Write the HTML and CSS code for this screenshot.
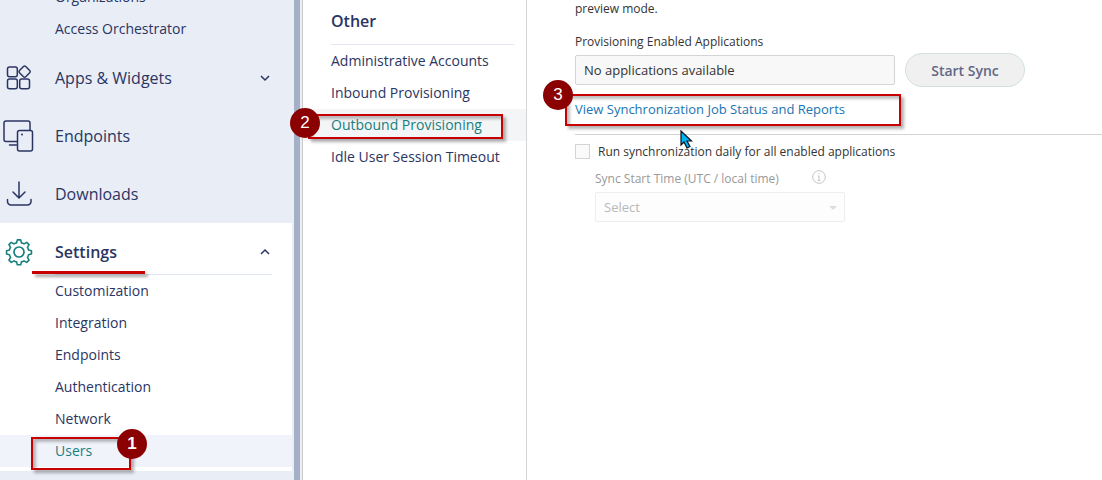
FILE: index.html
```html
<!DOCTYPE html>
<html lang="en">
<head>
<meta charset="UTF-8">
<meta name="viewport" content="width=device-width, initial-scale=1.0">
<title>Outbound Provisioning</title>
<link rel="stylesheet" href="styles.css">
</head>
<body>
<div class="layout">

<nav class="sidebar">
  <ul class="sub-list scrolled">
    <li><a href="#">Organizations</a></li>
    <li><a href="#">Access Orchestrator</a></li>
  </ul>
  <a class="nav-item" href="#">
    <svg class="icon" viewBox="0 0 38 38">
      <rect x="7.500" y="8" width="9.800" height="9.800" rx="2"/>
      <rect x="7.500" y="20" width="9.800" height="9.800" rx="2"/>
      <rect x="19.700" y="20" width="9.800" height="9.800" rx="2"/>
      <rect x="20.200" y="8.200" width="8.800" height="8.800" rx="1.600" transform="rotate(45 24.600 12.600)"/>
    </svg>
    <span>Apps &amp; Widgets</span>
    <svg class="chevron" viewBox="0 0 12 12"><path d="M2 4l4 4 4-4"/></svg>
  </a>
  <a class="nav-item" href="#">
    <svg class="icon" viewBox="0 0 38 38">
      <path d="M17 24.500H6a2 2 0 0 1-2-2V6a2 2 0 0 1 2-2h22a2 2 0 0 1 2 2v7M9.500 28h7"/>
      <rect x="17.500" y="13.500" width="15" height="20.500" rx="2"/>
      <circle class="dot" cx="22" cy="17.500" r="1"/>
    </svg>
    <span>Endpoints</span>
  </a>
  <a class="nav-item" href="#">
    <svg class="icon" viewBox="0 0 38 38">
      <path d="M19 7v16M13 17l6 6 6-6M7.500 24.500v2a3.500 3.500 0 0 0 3.500 3.500h16.500a3.500 3.500 0 0 0 3.500-3.500v-2"/>
    </svg>
    <span>Downloads</span>
  </a>
  <div class="nav-group">
    <a class="nav-item open" href="#">
      <svg class="icon teal" viewBox="0 0 38 38">
        <path transform="translate(19 19) scale(.93)" d="M-1.800-13h3.600l.8 3.200q1.600.3 2.800 1.100l2.900-1.700 2.500 2.500-1.700 2.900q.8 1.200 1.100 2.800l3.200.8v3.600l-3.200.8q-.3 1.600-1.100 2.800l1.700 2.900-2.500 2.500-2.900-1.700q-1.200.8-2.800 1.100l-.8 3.200h-3.600l-.8-3.200q-1.600-.3-2.800-1.100l-2.900 1.700-2.500-2.500 1.700-2.900q-.8-1.200-1.100-2.800l-3.200-.8v-3.600l3.200-.8q.3-1.600 1.100-2.800l-1.700-2.900 2.500-2.500 2.900 1.700q1.200-.8 2.800-1.100z"/>
        <circle cx="19" cy="19" r="5"/>
      </svg>
      <span>Settings</span>
      <svg class="chevron" viewBox="0 0 12 12"><path d="M2 8l4-4 4 4"/></svg>
      <i class="underline"></i>
    </a>
    <ul class="sub-list">
      <li><a href="#">Customization</a></li>
      <li><a href="#">Integration</a></li>
      <li><a href="#">Endpoints</a></li>
      <li><a href="#">Authentication</a></li>
      <li><a href="#">Network</a></li>
      <li class="current"><a href="#">Users</a>
        <div class="mark mark-users"><b class="badge">1</b></div>
      </li>
    </ul>
  </div>
</nav>
<div class="scrollbar"></div>

<section class="menu">
  <h2>Other</h2>
  <ul>
    <li><a href="#">Administrative Accounts</a></li>
    <li><a href="#">Inbound Provisioning</a></li>
    <li class="current"><a href="#">Outbound Provisioning</a>
      <div class="mark mark-outbound"><b class="badge">2</b></div>
    </li>
    <li><a href="#">Idle User Session Timeout</a></li>
  </ul>
</section>

<main class="content">
  <p>preview mode.</p>
  <label class="field-label" for="apps">Provisioning Enabled Applications</label>
  <div class="apps-row">
    <input type="text" id="apps" value="No applications available" readonly>
    <button type="button">Start Sync</button>
  </div>
  <div class="status">
    <a href="#">View Synchronization Job Status and Reports</a>
    <div class="mark mark-status"><b class="badge">3</b></div>
    <svg class="pointer" viewBox="0 0 13 19"><path d="M1 1v14l3-3 3 6 3-1.500-3-5.500h4.500z"/></svg>
  </div>
  <div class="daily">
    <input type="checkbox" id="daily">
    <label for="daily">Run synchronization daily for all enabled applications</label>
  </div>
  <div class="schedule">
    <div class="schedule-head">
      <label for="start">Sync Start Time (UTC / local time)</label>
      <svg class="info" viewBox="0 0 14 14"><circle cx="7" cy="7" r="6.300"/><path d="M7 6v4.500M5.800 6H7M5.600 10.500h2.800M7 3.200v1.300"/></svg>
    </div>
    <div class="select">
      <select id="start" disabled><option>Select</option></select>
    </div>
  </div>
</main>

</div>
</body>
</html>
```

FILE: styles.css
```css
* {
  box-sizing: border-box;
}
body {
  margin: 0;
  font-family: "Open Sans", "Noto Sans", sans-serif;
  font-size: 14px;
  color: #2b3563;
  background: #fff;
}
a {
  color: inherit;
  text-decoration: none;
}
ul {
  list-style: none;
  margin: 0;
  padding: 0;
}
.layout {
  display: flex;
  height: 100vh;
  overflow: hidden;
}

/* left navigation */
.sidebar {
  flex: 0 0 294px;
  padding-right: 2px;
  background: #e8edf6;
}
.scrollbar {
  flex: 0 0 9px;
  background: #a5afc5;
  border-right: 1px solid #ccc;
  box-shadow: inset -2px 0 #e8edf6;
}
.sub-list li {
  position: relative;
  height: 32px;
  line-height: 32px;
  padding-left: 55px;
}
.sub-list.scrolled {
  margin-top: -19px;
  padding-bottom: 4px;
}
.nav-item {
  display: flex;
  align-items: center;
  height: 58px;
  padding-right: 21px;
  font-size: 16px;
}
.nav-item span {
  flex: 1;
  margin-left: 17px;
}
.icon {
  width: 38px;
  height: 38px;
  fill: none;
  stroke: #2b3563;
  stroke-width: 1.5;
  stroke-linecap: round;
  stroke-linejoin: round;
}
.icon .dot {
  fill: #2b3563;
  stroke: none;
}
.icon.teal {
  stroke: #16807f;
  stroke-width: 1.7;
}
.chevron {
  width: 12px;
  height: 12px;
  fill: none;
  stroke: #2b3563;
  stroke-width: 1.5;
}
.nav-group {
  background: #fff;
  padding-bottom: 4px;
}
.nav-item.open {
  position: relative;
  height: 52px;
  padding-top: 6px;
  font-weight: 600;
}
.nav-item.open::after {
  content: "";
  position: absolute;
  left: 55px;
  right: 20px;
  bottom: 0;
  border-bottom: 1px solid #dfe5ee;
}
.sub-list .current {
  background: #f1f3fb;
  color: #16807f;
}

/* second level menu */
.menu {
  flex: 0 0 224px;
  border-right: 1px solid #d4d4d4;
}
.menu h2 {
  height: 45px;
  margin: 0 12px 0 28px;
  border-bottom: 1px solid #e2e6f5;
  font-size: 16px;
  font-weight: 600;
  line-height: 42px;
}
.menu li {
  position: relative;
  height: 32px;
  line-height: 32px;
  padding-left: 28px;
}
.menu .current {
  background: #f4f5f7;
  color: #16807f;
}

/* settings form */
.content {
  flex: 1;
  min-width: 0;
  padding-left: 48px;
  color: #333;
  font-size: 12px;
}
.content p {
  margin: 0 0 16px;
  line-height: 17px;
}
.field-label {
  display: block;
  height: 21px;
  line-height: 17px;
}
.apps-row {
  display: flex;
  align-items: center;
  gap: 10px;
  height: 32px;
}
.apps-row input {
  width: 320px;
  height: 30px;
  padding: 0 8px;
  border: 1px solid #d4d4d4;
  border-radius: 2px;
  background: #f8f8f8;
  color: #333;
  font: 13px "Open Sans", "Noto Sans", sans-serif;
}
.apps-row button {
  width: 120px;
  height: 34px;
  padding: 0;
  border: 1px solid #d3dfe0;
  border-radius: 17px;
  background: #f0f0f0;
  color: #626786;
  font: 600 14px "Open Sans", "Noto Sans", sans-serif;
}
.status {
  position: relative;
  height: 49px;
  padding-top: 13px;
  border-bottom: 1px solid #d4d4d4;
  font-size: 13px;
  line-height: 20px;
  color: #1874b4;
}
.daily {
  display: flex;
  align-items: center;
  gap: 8px;
  height: 32px;
}
.daily input {
  appearance: none;
  width: 15px;
  height: 15px;
  margin: 0;
  border: 1px solid #d4d4d4;
  background: #fafafa;
}
.schedule {
  padding-left: 20px;
  color: #999;
}
.schedule-head {
  display: flex;
  align-items: center;
  gap: 33px;
  height: 25px;
  padding-bottom: 2px;
}
.info {
  width: 14px;
  height: 14px;
  margin-bottom: 4px;
  fill: none;
  stroke: #c4c4c4;
}
.select {
  position: relative;
  width: 250px;
}
.select select {
  display: block;
  appearance: none;
  width: 100%;
  height: 30px;
  padding: 0 8px;
  border: 1px solid #eee;
  border-radius: 2px;
  background: #fdfdfd;
  color: #b8b8b8;
  opacity: 1;
  font: 13px "Open Sans", "Noto Sans", sans-serif;
}
.select::after {
  content: "";
  position: absolute;
  right: 8px;
  top: 14px;
  border: 4px solid transparent;
  border-top-color: #ddd;
  border-bottom: 0;
}

/* numbered step marks */
.mark {
  position: absolute;
  border: 2px solid #c80000;
  box-shadow: 3px 3px 3px rgba(0, 0, 0, 0.3), inset 3px 3px 3px rgba(0, 0, 0, 0.25);
  pointer-events: none;
}
.mark-users {
  left: 31px;
  top: 2px;
  width: 100px;
  height: 33px;
}
.mark-outbound {
  left: 5px;
  top: 5px;
  width: 195px;
  height: 25px;
}
.mark-status {
  left: -10px;
  top: 8px;
  width: 336px;
  height: 32px;
}
.badge {
  position: absolute;
  left: -20px;
  top: -8px;
  width: 30px;
  height: 30px;
  border-radius: 50%;
  background: #8b0000;
  color: #fff;
  font: 17px/30px "Liberation Sans", Arial, sans-serif;
  text-align: center;
}
.mark-users .badge {
  left: 84px;
  font-weight: bold;
  top: -10px;
}
.mark-status .badge {
  left: -24px;
  top: -16px;
}
.underline {
  position: absolute;
  left: 32px;
  bottom: 1px;
  z-index: 1;
  width: 113px;
  height: 3px;
  background: #c80000;
  box-shadow: 3px 3px 3px rgba(0, 0, 0, 0.35);
}
.pointer {
  position: absolute;
  left: 105px;
  top: 44px;
  width: 13px;
  height: 19px;
  fill: #00b4f5;
  stroke: #111;
  stroke-width: 1.2;
}
```
